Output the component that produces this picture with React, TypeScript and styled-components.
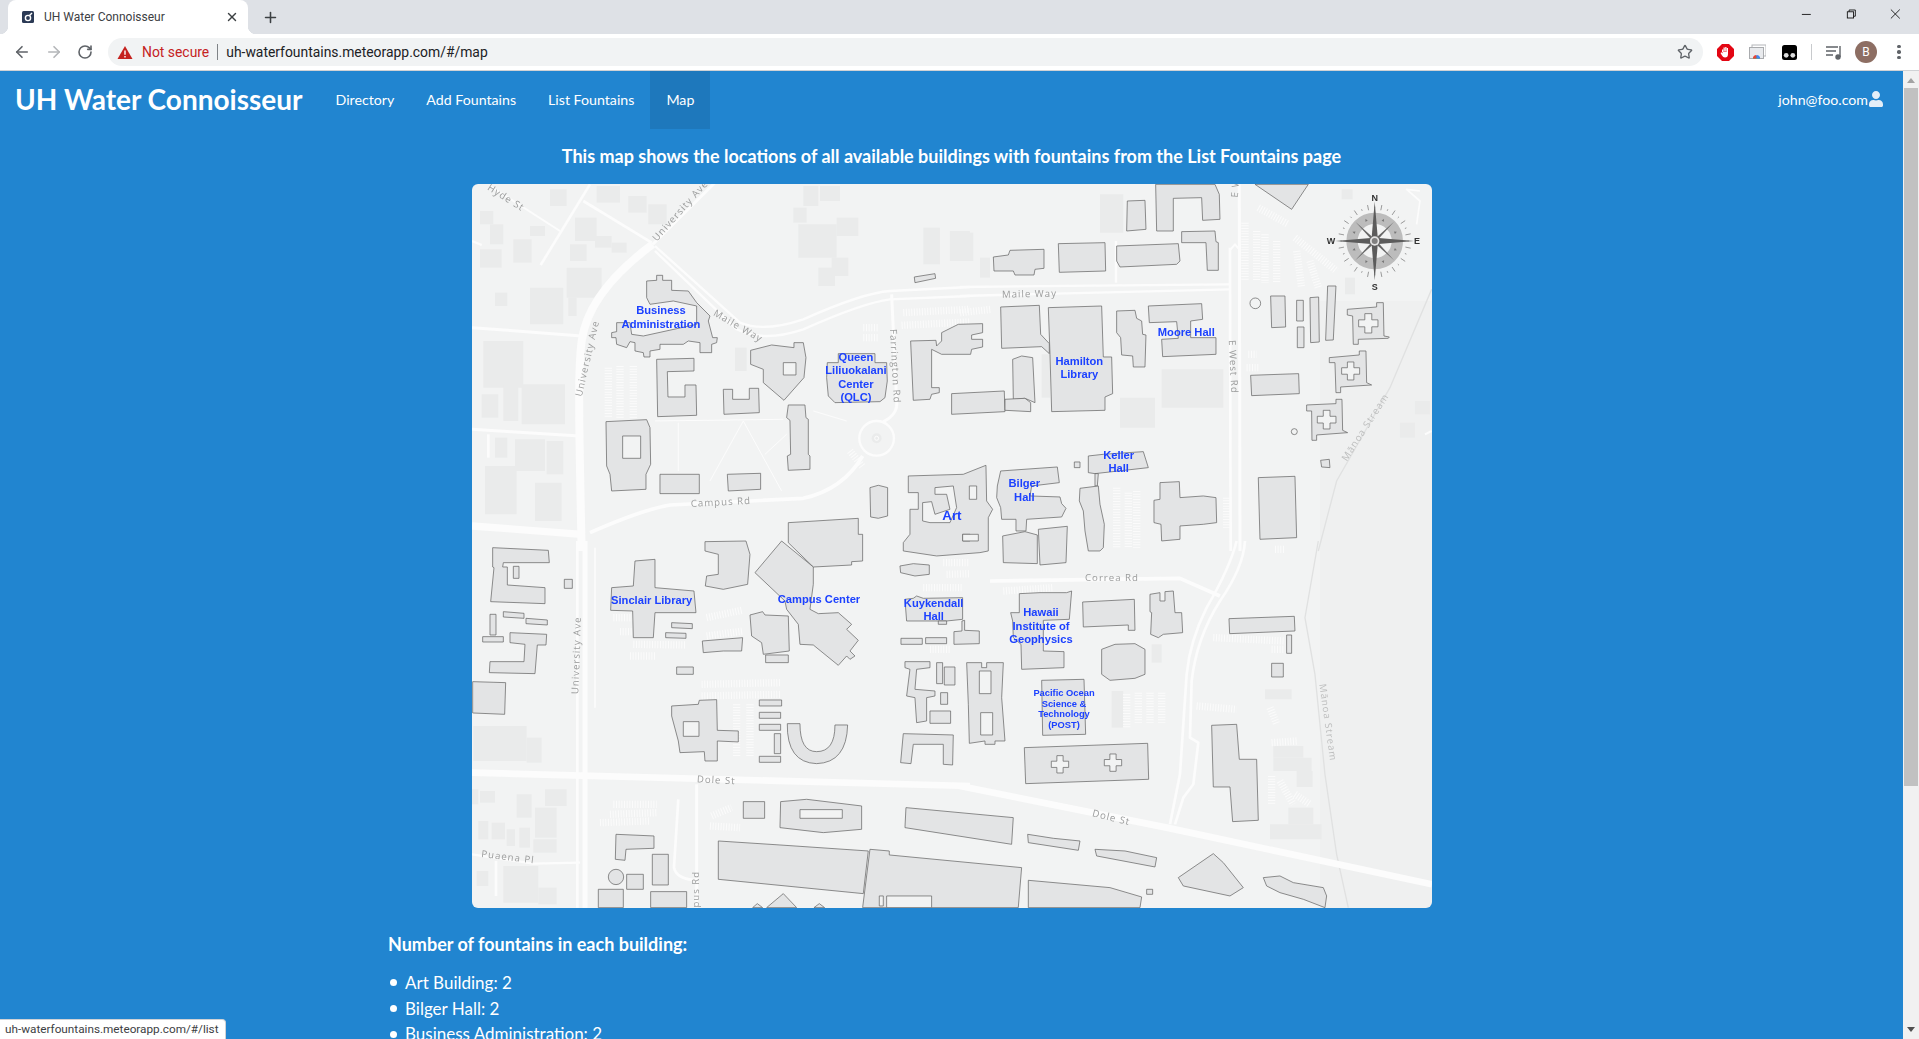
import styled, { createGlobalStyle } from 'styled-components';
import { ArrowLeft, ArrowRight, Plus, RotateCw, Star, X } from 'lucide-react';
import { FaUser } from 'react-icons/fa';

// map data is in "crop units": 3 units = 1px, each group has its own page offset
const r = (x1: number, y1: number, x2: number, y2: number) => `M${x1} ${y1}L${x2} ${y1}L${x2} ${y2}L${x1} ${y2}Z`;
const cross = (cx: number, cy: number, s = 30) => {
  const a = s * 0.36;
  return `M${cx - a} ${cy - s}H${cx + a}V${cy - a}H${cx + s}V${cy + a}H${cx + a}V${cy + s}H${cx - a}V${cy + a}H${cx - s}V${cy - a}H${cx - a}Z`;
};
const circle = (cx: number, cy: number, rad: number) => `M${cx - rad} ${cy}a${rad} ${rad} 0 1 0 ${rad * 2} 0a${rad} ${rad} 0 1 0 ${-rad * 2} 0Z`;

type Road = { d: string; w: number };
type RoadLabel = { t: string; x: number; y: number; a: number; light?: boolean };
type Label = { lines: string[]; x: number; y: number; size?: number; pitch?: number };
type Layer = {
  x: number;
  y: number;
  off: string[];
  stripes: string[];
  roads: Road[];
  buildings: string[];
  holes: string[];
  roadLabels: RoadLabel[];
  labels: Label[];
};

const layers: Layer[] = [
  {
    x: 470,
    y: 180,
    off: [
      r(30, 90, 70, 130), r(60, 130, 100, 190), r(130, 175, 185, 245), r(180, 135, 225, 165), r(240, 25, 290, 75),
      r(315, 110, 380, 180), r(300, 190, 350, 240), r(375, 165, 425, 200), r(425, 185, 470, 215), r(380, 15, 450, 65),
      r(475, 45, 530, 95), r(535, 70, 590, 130), r(290, 260, 395, 350), r(30, 205, 95, 260),
      r(75, 335, 112, 375), r(180, 320, 280, 430), r(295, 350, 320, 405), r(40, 480, 160, 620),
      r(35, 640, 85, 710), r(100, 610, 145, 720), r(155, 610, 285, 730), r(75, 770, 112, 830), r(135, 775, 225, 870),
      r(230, 780, 280, 880), r(45, 855, 140, 1000), r(195, 905, 275, 1020),
      r(970, 80, 1010, 125), r(985, 130, 1100, 230), r(1100, 110, 1165, 165), r(1000, 15, 1045, 75), r(1360, 140, 1410, 250),
      r(1440, 150, 1500, 240), r(1045, 260, 1095, 315), r(1085, 230, 1135, 285), r(1050, 15, 1110, 60),
      r(795, 500, 830, 570), circle(1220, 772, 15),
    ],
    stripes: ['M1300 395L1500 385', 'M1295 433L1500 423', 'M415 560L415 710', 'M450 555L450 710', 'M490 555L490 710', 'M1180 440L1225 440', 'M1180 470L1225 470', 'M1140 810L1180 860'],
    roads: [
      { d: 'M548 190C440 270 350 370 335 480C325 560 325 650 335 1110', w: 24 },
      { d: 'M548 190L735 5', w: 9 },
      { d: 'M340 60L545 185', w: 8 },
      { d: 'M360 10L212 252', w: 8 },
      { d: 'M60 15L270 150', w: 6 },
      { d: 'M6 180L35 192', w: 7 },
      { d: 'M555 195L810 425Q880 455 1000 415Q1180 335 1260 330L1500 318', w: 7 },
      { d: 'M555 210L800 445Q880 485 1000 445Q1180 365 1260 355L1500 345', w: 7 },
      { d: 'M1265 340L1280 660Q1285 700 1240 722', w: 9 },
      { d: 'M6 440L335 465', w: 9 },
      { d: 'M6 745L330 765', w: 9 },
      { d: 'M55 760L55 830', w: 8 },
      { d: 'M6 1035L335 1060', w: 22 },
      { d: 'M360 1055Q520 985 600 972L1000 952Q1120 925 1178 825', w: 11 },
      { d: circle(1220, 772, 52), w: 7 },
      { d: circle(1220, 772, 6), w: 3 },
      { d: 'M625 725L625 870', w: 3 },
      { d: 'M820 720L720 900', w: 3 },
      { d: 'M820 720L935 930', w: 3 },
      { d: 'M885 820L950 760', w: 3 },
      { d: 'M555 720L940 715', w: 3 },
      { d: 'M1030 690L1130 720', w: 3 },
    ],
    buildings: [
      'M530 300L560 298L560 283L578 283L578 298L605 298L605 328L655 330L680 365L720 405L715 420L728 470L742 470L740 485L725 490L725 515L690 515L690 485L655 480L640 490L570 490L570 505L540 510L540 528L522 528L520 515L495 510L495 485L480 482L470 500L440 490L438 470L425 470L425 455L440 452L440 425L480 425L485 460L520 465L680 430L680 375L610 360L540 370L530 350Z',
      'M560 535L672 532L672 570L592 572L594 648L645 648L645 612L678 612L680 703L563 707Z',
      'M760 625L788 625L788 655L838 655L838 622L866 622L868 695L762 700Z',
      'M842 508L905 492L972 500L972 485L1000 485L1008 530L1002 590L942 658L880 605L880 565L842 550Z',
      'M1072 545L1105 545L1105 518L1215 518L1215 545L1250 545L1252 600L1245 650L1230 662L1095 665L1075 645L1070 590Z',
      'M955 672L1005 672L1008 710L1015 715L1015 820L1020 825L1020 865L955 868L952 825L962 820L960 718L950 710Z',
      'M408 722L530 716L540 740L542 850L528 880L528 925L425 930L420 880L410 855Z',
      r(570, 880, 688, 938),
      'M772 880L872 877L872 925L775 930Z',
      'M1322 480L1398 478L1400 495L1415 480L1415 455L1465 430L1538 428L1538 455L1505 462L1505 475L1538 475L1538 498L1505 505L1502 520L1415 520L1385 505L1385 620L1408 620L1408 635L1385 640L1380 655L1330 658Z',
      'M1445 638L1603 630L1605 692L1445 700Z',
      'M1200 920L1225 913L1253 920L1253 1005L1225 1012L1202 1008Z',
      'M1315 885L1480 880L1548 853L1550 960L1568 985L1555 1010L1555 1110L1530 1115L1400 1125L1300 1110L1300 1085L1320 1060L1320 985L1345 985L1345 935L1315 935Z',
      'M1333 288L1395 278L1397 292L1335 305Z',
    ],
    holes: [
      r(940, 545, 978, 582),
      r(458, 765, 512, 832),
      'M1395 920L1450 915L1460 980L1440 1025L1380 1025L1358 1020L1358 965L1385 962L1395 1000L1440 985L1430 940L1395 940Z',
      r(1478, 1060, 1500, 1080),
    ],
    roadLabels: [
      { t: 'Hyde St', x: 50, y: 25, a: 32 },
      { t: 'University Ave', x: 560, y: 182, a: -48 },
      { t: 'University Ave', x: 335, y: 648, a: -77 },
      { t: 'Maile Way', x: 728, y: 402, a: 30 },
      { t: 'Farrington Rd', x: 1260, y: 445, a: 87 },
      { t: 'Campus Rd', x: 663, y: 978, a: -3 },
    ],
    labels: [
      { lines: ['Business', 'Administration'], x: 573, y: 400 },
      { lines: ['Queen', 'Liliuokalani', 'Center', '(QLC)'], x: 1158, y: 540 },
      { lines: ['Art'], x: 1446, y: 1017, size: 40 },
    ],
  },
  {
    x: 960,
    y: 180,
    off: [
      r(0, 155, 40, 240), r(60, 230, 90, 290), r(420, 40, 490, 155), r(1145, 25, 1178, 55), r(1155, 290, 1185, 340),
      r(605, 565, 790, 680), r(480, 650, 585, 740), r(245, 520, 270, 650), r(1365, 660, 1410, 700), r(1320, 725, 1365, 770),
    ],
    stripes: ['M855 125L855 300', 'M890 150L890 300', 'M915 160L915 305', 'M950 180L950 305', 'M1010 210L1025 320', 'M1050 240L1075 320', 'M1005 170L1130 270', 'M895 80L985 130', 'M0 395L95 385', 'M470 920L470 1100', 'M505 935L505 1100', 'M530 930L530 1100', 'M800 950L800 1040', 'M865 520L890 520', 'M860 560L895 560'],
    roads: [
      { d: 'M810 200L812 1110', w: 8 },
      { d: 'M838 10L840 1110', w: 9 },
      { d: 'M812 205L825 190L838 205', w: 6 },
      { d: 'M0 318L810 310', w: 7 },
      { d: 'M0 345L810 325', w: 7 },
      { d: 'M468 180L468 305', w: 7 },
      { d: 'M1380 30L1340 25L1380 60L1370 130', w: 5 },
      { d: 'M1415 750L1395 760', w: 6 },
    ],
    buildings: [
      'M502 60L555 58L558 145L500 150Z',
      'M587 10L765 10L778 40L780 115L728 118L725 50L640 52L640 150L590 150Z',
      'M100 228L145 222L150 208L252 205L252 262L225 265L222 282L165 282L160 270L102 270Z',
      'M295 188L435 185L437 270L298 274Z',
      'M470 195L655 188L660 240L650 250L480 258L470 240Z',
      'M665 152L765 150L768 182L775 185L775 268L742 268L738 185L665 185Z',
      'M885 10L1045 10L995 85Z',
      'M122 378L238 373L242 460L268 488L268 518L245 497L125 502Z',
      'M265 380L425 375L430 528L455 528L458 638L435 648L435 688L275 692L270 520Z',
      'M470 390L525 388L530 412L545 420L548 460L558 462L555 558L520 558L518 525L485 522L482 470L470 455Z',
      'M565 375L725 368L728 415L692 420L692 470L768 470L768 520L608 527L605 475L655 472L650 422L568 425Z',
      'M158 535L185 525L218 530L225 665L195 652L160 655Z',
      'M135 655L195 652L212 665L212 692L135 688Z',
      'M385 825L430 820L550 812L565 860L405 878L385 875Z',
      'M405 878L415 878L412 915L405 915Z',
      r(343, 843, 360, 860),
      'M360 922L415 915L420 970L433 1030L430 1100L420 1110L385 1110L375 1050L370 990L358 960Z',
      'M122 870L292 858L298 905L215 915L210 945L300 948L305 968L318 982L305 1008L200 1015L198 1050L168 1050L168 1015L125 1015L122 980L110 950L112 915Z',
      'M128 1065L195 1052L232 1062L232 1148L130 1145Z',
      'M235 1045L322 1036L318 1145L240 1152Z',
      'M600 905L658 902L660 950L730 945L768 950L770 1025L730 1030L660 1035L660 1075L605 1080L603 1030L582 1025L582 958L600 955Z',
      'M895 890L1005 886L1010 1070L900 1075Z',
      'M932 345L975 345L977 438L935 440Z',
      r(1010, 358, 1030, 420),
      r(1012, 438, 1032, 500),
      'M1050 350L1076 348L1078 483L1052 485Z',
      'M1103 315L1128 315L1120 477L1097 478Z',
      'M872 583L1016 578L1018 638L875 644Z',
      'M1162 385L1250 378L1250 365L1270 365L1272 465L1288 468L1285 472L1195 475L1195 490L1180 490L1178 405L1162 402Z',
      'M1108 530L1198 522L1198 510L1218 510L1220 605L1235 612L1142 618L1142 635L1128 635L1125 545L1108 545Z',
      'M1040 672L1128 668L1128 655L1146 655L1148 748L1163 755L1070 762L1070 778L1056 778L1055 690L1040 690Z',
      'M1082 838L1108 835L1110 860L1085 858Z',
    ],
    holes: [r(28, 915, 50, 955), r(8, 1060, 55, 1080), cross(1225, 427, 29), cross(1172, 570, 27), cross(1100, 716, 28), circle(886, 367, 16), circle(1003, 752, 9)],
    roadLabels: [
      { t: 'Maile Way', x: 126, y: 350, a: -1 },
      { t: 'E West Rd', x: 806, y: 478, a: 87 },
      { t: 'E W', x: 833, y: 50, a: -85 },
      { t: 'Mānoa Stream', x: 1160, y: 842, a: -57, light: true },
    ],
    labels: [
      { lines: ['Moore Hall'], x: 679, y: 464 },
      { lines: ['Hamilton', 'Library'], x: 358, y: 552 },
      { lines: ['Keller', 'Hall'], x: 476, y: 834 },
      { lines: ['Bilger', 'Hall'], x: 193, y: 919 },
    ],
  },
  {
    x: 470,
    y: 540,
    off: [
      r(10, 555, 170, 660), r(170, 590, 215, 665), r(6, 745, 25, 790), r(30, 750, 75, 785), r(140, 760, 185, 830), r(225, 745, 290, 795),
      r(195, 800, 260, 890), r(25, 840, 55, 895), r(65, 845, 105, 895), r(110, 865, 135, 915), r(148, 860, 180, 920), r(190, 895, 260, 935),
      r(100, 975, 205, 1085), r(205, 1040, 260, 1090), r(20, 990, 55, 1035),
    ],
    stripes: ['M430 230L490 230', 'M450 272L490 272', 'M490 310L645 312', 'M480 345L560 345', 'M710 230L815 208', 'M710 285L820 270', 'M695 430L930 425', 'M695 465L930 460', 'M430 790L560 790', 'M420 820L560 815', 'M390 845L540 840', 'M725 825L785 800', 'M720 855L810 860', 'M1420 65L1500 65', 'M1430 100L1500 98', 'M1360 140L1480 140', 'M1380 325L1440 325', 'M800 490L800 650', 'M840 490L840 650'],
    roads: [
      { d: 'M322 0L322 1100', w: 8 },
      { d: 'M345 0L345 1100', w: 15 },
      { d: 'M6 695L1500 735', w: 20 },
      { d: 'M680 730L680 1100', w: 9 },
      { d: 'M6 940L190 968L330 965', w: 7 },
      { d: 'M78 960L78 1065', w: 8 },
      { d: 'M625 775L612 980Q620 1015 680 1018', w: 8 },
      { d: 'M375 20L375 500', w: 5 },
    ],
    buildings: [
      'M68 20L235 28L238 65L100 65L98 78L112 78L112 132L225 140L225 188L62 182L72 80L68 78Z',
      r(130, 76, 147, 112), r(283, 115, 307, 142), 'M100 212L162 217L162 232L100 228Z', 'M168 232L232 237L232 252L168 248Z',
      r(60, 220, 78, 282), r(38, 287, 100, 303),
      'M120 275L230 280L228 312L202 312L195 398L58 395L60 362L162 362L165 310L120 305Z',
      'M8 422L107 425L104 520L8 516Z',
      'M495 60L555 55L555 140L672 150L678 215L555 215L550 290L490 290L488 210L422 208L425 140L490 135Z',
      'M605 245L667 248L667 263L605 260Z', 'M587 275L648 277L648 292L587 290Z',
      'M705 2L828 0L840 40L833 130L760 145L706 135L710 105L745 100L745 40L705 30Z',
      'M955 -55L1165 -68L1165 -20L1178 -20L1178 60L1145 62L1145 72L1050 77L1030 78L955 5Z',
      'M935 0L1030 78L1030 130L1020 205L1045 218L1105 215L1145 250L1130 265L1165 298L1140 330L1155 345L1140 355L1130 345L1105 373L1030 312L990 310L985 250L950 205L945 180L855 95Z',
      'M840 222L878 212L885 222L955 225L958 330L880 340L875 305L845 285Z',
      r(887, 342, 955, 365),
      'M697 300L818 290L815 330L760 330L700 335Z',
      r(620, 378, 670, 400),
      'M605 495L685 490L688 478L740 476L742 568L805 570L805 603L742 600L742 660L705 660L703 632L630 635L625 600L605 525Z',
      r(868, 477, 935, 495), r(868, 514, 932, 532), r(868, 550, 932, 568), r(913, 578, 932, 638), r(868, 646, 932, 664),
      'M952 548L990 548Q990 632 1040 632Q1095 632 1095 552L1133 552Q1130 665 1040 668Q950 665 952 548Z',
      'M1290 75L1330 68L1378 72L1378 100L1335 105L1292 95Z',
      'M1305 175L1330 172L1340 165L1360 172L1478 170L1478 235L1430 240L1310 240Z',
      r(1405, 240, 1430, 250), r(1293, 292, 1357, 310), r(1367, 290, 1430, 308), 'M1452 272L1476 270L1476 240L1484 238L1484 268L1528 270L1528 308L1452 310Z',
      'M1305 362L1380 362L1380 380L1340 385L1335 445L1395 450L1395 465L1370 470L1370 540L1340 545L1335 470L1310 465L1320 385L1305 380Z',
      r(1400, 365, 1418, 428), r(1423, 378, 1455, 432), r(1412, 455, 1433, 490), r(1380, 510, 1442, 547),
      'M1300 578L1450 582L1448 672L1420 670L1420 610L1330 610L1323 668L1292 665Z',
      r(820, 782, 884, 832),
      'M932 782L1010 775L1175 795L1175 865L1060 875L930 860Z',
      'M1308 800L1630 830L1625 910L1305 860Z',
      'M745 900L930 912L1195 930L1180 1058L745 1015Z',
      'M1200 925L1258 930L1258 942L1655 980L1645 1100L1178 1100Z',
      'M438 880L552 885L552 922L468 925L465 958L436 955Z',
      r(547, 940, 595, 1032), circle(438, 1008, 23), r(470, 1000, 520, 1045), r(385, 1045, 460, 1100), r(542, 1052, 650, 1100),
      'M890 1100L940 1058L980 1100Z', 'M848 1100L862 1088L878 1100Z', 'M1032 1100L1048 1088L1064 1100Z',
    ],
    holes: [r(640, 542, 687, 586), r(990, 806, 1117, 832), r(1228, 1065, 1240, 1095), r(1250, 1065, 1385, 1100)],
    roadLabels: [
      { t: 'University Ave', x: 325, y: 460, a: -88 },
      { t: 'Dole St', x: 680, y: 724, a: 3 },
      { t: 'Puaena Pl', x: 33, y: 948, a: 7 },
      { t: 'Campus Rd', x: 688, y: 1170, a: -90 },
    ],
    labels: [
      { lines: ['Sinclair Library'], x: 545, y: 189 },
      { lines: ['Campus Center'], x: 1047, y: 187 },
      { lines: ['Kuykendall', 'Hall'], x: 1391, y: 197 },
    ],
  },
  {
    x: 960,
    y: 540,
    off: [
      r(915, 445, 995, 475), r(940, 615, 1030, 650), r(940, 650, 1055, 690), r(1010, 690, 1058, 738), r(930, 850, 1085, 895), r(985, 800, 1060, 850),
      r(575, 310, 605, 365), r(455, 450, 490, 560),
    ],
    stripes: ['M500 460L500 560', 'M535 455L535 545', 'M570 455L570 545', 'M605 455L605 545', 'M710 495L830 505', 'M930 500L950 550', 'M935 605L1010 600', 'M935 705L935 790', 'M960 720L1000 790', 'M1005 760L1050 790', 'M130 150L280 140', 'M945 25L975 25', 'M935 325L975 325', 'M760 290L975 300'],
    roads: [
      { d: 'M90 120L660 112L780 165', w: 11 },
      { d: 'M830 0Q810 80 740 200Q690 300 680 400L660 700L630 850', w: 8 },
      { d: 'M855 0Q850 80 780 180Q710 290 695 420L690 590L715 605L700 730L670 770L645 850', w: 8 },
      { d: 'M0 735L620 860L1416 1030', w: 20 },
    ],
    buildings: [
      'M178 158L240 155L320 155L335 150L328 235L250 238L250 330L312 332L312 380L185 385L183 310L160 290L158 240L152 215L178 215Z',
      'M368 183L523 175L525 268L505 268L505 252L370 258Z',
      'M570 160L600 155L600 180L615 180L615 152L640 150L645 215L665 215L668 275L610 280L595 290L572 280L575 215L570 212Z',
      'M425 325L465 310L525 308L555 325L555 400L525 412L450 418L425 400Z',
      'M20 365L65 365L65 380L80 380L80 365L130 365L125 470L135 600L105 600L105 610L75 610L75 600L28 607L25 490Z',
      'M245 418L372 415L377 580L248 583Z',
      'M193 620L563 607L566 715L197 728Z',
      'M807 233L1003 226L1005 270L809 278Z',
      r(980, 282, 995, 337),
      r(935, 367, 970, 408),
      'M755 553L830 550L838 655L890 655L895 838L818 842L810 738L760 738Z',
      'M203 880L280 892L360 900L355 928L205 905Z',
      'M405 925L495 930L590 950L585 978L410 945Z',
      'M205 1018L450 1040L545 1068L540 1100L205 1100Z',
      'M655 1010L760 938L790 965L850 1040L810 1065L670 1035Z',
      'M910 1010L960 1005L1000 1025L1090 1040L1100 1065L1095 1100L1030 1075L960 1055L920 1035Z',
      r(560, 1045, 578, 1060),
    ],
    holes: [r(58, 390, 93, 458), r(62, 515, 98, 582), cross(300, 670, 26), cross(459, 665, 26)],
    roadLabels: [
      { t: 'Correa Rd', x: 375, y: 121, a: 0 },
      { t: 'Dole St', x: 395, y: 825, a: 14 },
      { t: 'Mānoa Stream', x: 1078, y: 430, a: 82, light: true },
    ],
    labels: [
      { lines: ['Hawaii', 'Institute of', 'Geophysics'], x: 243, y: 226 },
      { lines: ['Pacific Ocean', 'Science &', 'Technology', '(POST)'], x: 312, y: 465, size: 28, pitch: 32 },
    ],
  },
];

const ticks = Array.from({ length: 32 }, (_, i) => (i * 360) / 32);
const markers = [22.5, 67.5, 112.5, 157.5, 202.5, 247.5, 292.5, 337.5];

const Compass = () => (
  <g transform="translate(1374.7 240) scale(0.3333)">
    <circle r="68" fill="none" stroke="#bcbcbc" strokeWidth="34" />
    {ticks.map((a, i) => (
      <line key={a} y1={i % 2 ? -98 : -94} y2={i % 2 ? -103 : -110} stroke="#777" strokeWidth="2" transform={`rotate(${a + 11.25})`} />
    ))}
    {markers.map((a) => (
      <path key={a} d="M0 -72l-4 8h8Z" fill="#777" transform={`rotate(${a})`} />
    ))}
    {[45, 135, 225, 315].map((a) => (
      <path key={a} d="M0 -82L-4 -10L4 -10Z" fill="#666" transform={`rotate(${a})`} />
    ))}
    {[0, 90, 180, 270].map((a) => (
      <path key={a} d="M0 -118L-9 -12L9 -12Z" fill="#5c5c5c" transform={`rotate(${a})`} />
    ))}
    <circle r="14" fill="#e4e4e4" />
    <circle r="9" fill="#808080" />
    <CompassLetter y={-121}>N</CompassLetter>
    <CompassLetter y={146}>S</CompassLetter>
    <CompassLetter x={127} y={10}>E</CompassLetter>
    <CompassLetter x={-131} y={10}>W</CompassLetter>
  </g>
);

const CampusMap = () => (
  <MapSvg viewBox="472 183 960 724">
    <rect x="472" y="183" width="960" height="724" fill="#f2f3f3" />
    <rect x="1320" y="300" width="112" height="607" fill="#eeeeee" opacity="0.7" />
    {layers.map((l) => (
      <g key={`${l.x}-${l.y}-off`} transform={`translate(${l.x} ${l.y}) scale(0.3333)`}>
        {l.off.map((d) => (
          <OffBuilding key={d} d={d} />
        ))}
        {l.stripes.map((d) => (
          <Stripe key={d} d={d} />
        ))}
      </g>
    ))}
    <g transform="translate(960 180) scale(0.3333)">
      <Stream d="M1415 325L1290 620L1130 900L1075 1110" />
    </g>
    <g transform="translate(960 540) scale(0.3333)">
      <Stream d="M1075 0L1035 230L1065 400L1095 700L1130 940L1165 1100" />
    </g>
    {layers.map((l) => (
      <g key={`${l.x}-${l.y}-roads`} transform={`translate(${l.x} ${l.y}) scale(0.3333)`}>
        {l.roads.map((road) => (
          <RoadLine key={road.d} d={road.d} strokeWidth={road.w} />
        ))}
      </g>
    ))}
    {layers.map((l) => (
      <g key={`${l.x}-${l.y}-b`} transform={`translate(${l.x} ${l.y}) scale(0.3333)`}>
        {l.buildings.map((d) => (
          <Building key={d} d={d} />
        ))}
        {l.holes.map((d) => (
          <Hole key={d} d={d} />
        ))}
      </g>
    ))}
    {layers.map((l) => (
      <g key={`${l.x}-${l.y}-t`} transform={`translate(${l.x} ${l.y}) scale(0.3333)`}>
        {l.roadLabels.map((t) => (
          <RoadText key={`${t.t}${t.x}`} $light={t.light} transform={`translate(${t.x} ${t.y}) rotate(${t.a})`}>
            {t.t}
          </RoadText>
        ))}
        {l.labels.map((label) =>
          label.lines.map((line, i) => (
            <BuildingText key={line} x={label.x} y={label.y + i * (label.pitch ?? 40)} $size={label.size ?? 33.5}>
              {line}
            </BuildingText>
          )),
        )}
      </g>
    ))}
    <Compass />
  </MapSvg>
);

const counts = ['Art Building: 2', 'Bilger Hall: 2', 'Business Administration: 2', 'Campus Center: 2'];

const App = () => {
  return (
    <>
      <GlobalStyle />
      <Window>
        <TabStrip>
          <Tab>
            <svg width="12" height="12" viewBox="0 0 12 12">
              <rect width="12" height="12" rx="1.5" fill="#2b3a55" />
              <circle cx="6" cy="7" r="2.6" fill="none" stroke="#fff" strokeWidth="1.4" />
              <path d="M7.5 4.5L10 2" stroke="#fff" strokeWidth="1.4" />
            </svg>
            <TabTitle>UH Water Connoisseur</TabTitle>
            <X size={14} color="#3c4043" strokeWidth={2.4} />
          </Tab>
          <NewTab>
            <Plus size={17} color="#3c4043" strokeWidth={2.2} />
          </NewTab>
          <WindowControls>
            <svg width="12" height="12" viewBox="0 0 12 12">
              <path d="M1 6.5H11" stroke="#111" />
            </svg>
            <svg width="12" height="12" viewBox="0 0 12 12" fill="none" stroke="#111">
              <rect x="1.5" y="3.5" width="7" height="7" />
              <path d="M3.5 3.5V1.5H10.5V8.5H8.5" />
            </svg>
            <svg width="12" height="12" viewBox="0 0 12 12">
              <path d="M1 1L11 11M11 1L1 11" stroke="#111" />
            </svg>
          </WindowControls>
        </TabStrip>
        <Toolbar>
          <NavIcons>
            <ArrowLeft size={18} color="#5f6368" strokeWidth={2.2} />
            <ArrowRight size={18} color="#b4b6b9" strokeWidth={2.2} />
            <RotateCw size={16} color="#5f6368" strokeWidth={2.4} />
          </NavIcons>
          <Omnibox>
            <svg width="16" height="15" viewBox="0 0 16 15">
              <path d="M8 1L15.5 14H.5Z" fill="#c5221f" />
              <path d="M8 5.5V9.8M8 11V12.4" stroke="#fff" strokeWidth="1.4" />
            </svg>
            <NotSecure>Not secure</NotSecure>
            <OmniDivider />
            <Url>uh-waterfountains.meteorapp.com/#/map</Url>
            <Star size={16} color="#5f6368" strokeWidth={2} />
          </Omnibox>
          <Extensions>
            <ExtIcon $gap={14}>
              <svg width="17" height="17" viewBox="0 0 17 17">
                <path d="M5 0H12L17 5V12L12 17H5L0 12V5Z" fill="#e30613" />
                <path d="M5 8V5.5H6.2V8M6.5 7V3.5H7.8V7M8.2 7V3H9.5V7M9.8 7.5V4H11V10Q11 13.5 8 13.5Q6 13.5 5 11.5L3.5 9L4.5 8.3L5.5 9.5V7.5Z" fill="#fff" />
              </svg>
            </ExtIcon>
            <ExtIcon $gap={15}>
              <svg width="17" height="16" viewBox="0 0 17 16">
                <rect x="3" y="1" width="14" height="11" fill="none" stroke="#b4b6b9" />
                <rect x=".5" y="3.5" width="14" height="11" fill="#e8eaed" stroke="#a9abae" />
                <path d="M4 14.5a3.6 3.6 0 0 1 7 0Z" fill="#34a853" />
                <path d="M4 14.5a3.6 3.6 0 0 1 3.5 -3.6V14.5Z" fill="#ea4335" />
                <path d="M7.5 10.9a3.6 3.6 0 0 1 3.5 3.6H7.5Z" fill="#4285f4" />
              </svg>
            </ExtIcon>
            <ExtIcon $gap={16}>
              <svg width="15" height="15" viewBox="0 0 15 15">
                <rect width="15" height="15" rx="2.5" fill="#000" />
                <circle cx="4.2" cy="10.3" r="2.4" fill="#ddd" />
                <circle cx="10.8" cy="10.3" r="2.4" fill="#ddd" />
              </svg>
            </ExtIcon>
            <ExtDivider />
            <ExtIcon $gap={14}>
              <svg width="17" height="15" viewBox="0 0 17 15" fill="none" stroke="#5f6368" strokeWidth="1.4">
                <path d="M0 2H12M0 6H10M0 10H7" />
                <path d="M14 1V12" />
                <circle cx="12" cy="12" r="2" fill="#5f6368" />
              </svg>
            </ExtIcon>
            <Avatar>B</Avatar>
            <MenuDots>
              <i />
              <i />
              <i />
            </MenuDots>
          </Extensions>
        </Toolbar>
        <PageArea>
          <Page>
            <NavBar>
              <Brand>UH Water Connoisseur</Brand>
              <NavItem>Directory</NavItem>
              <NavItem>Add Fountains</NavItem>
              <NavItem>List Fountains</NavItem>
              <NavItem $active>Map</NavItem>
              <UserMenu>
                john@foo.com
                <FaUser size={16} color="#e3eef8" />
              </UserMenu>
            </NavBar>
            <Heading>This map shows the locations of all available buildings with fountains from the List Fountains page</Heading>
            <MapFrame>
              <CampusMap />
            </MapFrame>
            <Container>
              <SubHeading>Number of fountains in each building:</SubHeading>
              <CountList>
                {counts.map((c) => (
                  <li key={c}>{c}</li>
                ))}
              </CountList>
            </Container>
          </Page>
          <ScrollBar>
            <ScrollArrow />
            <ScrollThumb />
            <ScrollArrow $down />
          </ScrollBar>
          <StatusBubble>uh-waterfountains.meteorapp.com/#/list</StatusBubble>
        </PageArea>
      </Window>
    </>
  );
};

export default App;

const GlobalStyle = createGlobalStyle`
  html, body {
    margin: 0;
    height: 100%;
    overflow: hidden;
    font-family: Lato, "Liberation Sans", sans-serif;
  }
  * { box-sizing: border-box; }
`;

const Window = styled.div`
  width: 100vw;
  height: 100vh;
  display: flex;
  flex-direction: column;
  overflow: hidden;
`;

const TabStrip = styled.div`
  height: 34px;
  flex: none;
  background: #dee1e6;
  display: flex;
  align-items: stretch;
  padding-left: 8px;
`;

const Tab = styled.div`
  position: relative;
  width: 240px;
  background: #fff;
  border-radius: 8px 8px 0 0;
  display: flex;
  align-items: center;
  padding: 0 9px 0 14px;
  color: #3c4043;

  &::before,
  &::after {
    content: '';
    position: absolute;
    bottom: 0;
    width: 8px;
    height: 8px;
  }
  &::before {
    left: -8px;
    background: radial-gradient(circle at 0 0, #dee1e6 8px, #fff 8.5px);
  }
  &::after {
    right: -8px;
    background: radial-gradient(circle at 100% 0, #dee1e6 8px, #fff 8.5px);
  }
`;

const TabTitle = styled.span`
  flex: 1;
  margin-left: 10px;
  font: 12px Roboto, sans-serif;
`;

const NewTab = styled.div`
  width: 44px;
  display: flex;
  align-items: center;
  justify-content: center;
`;

const WindowControls = styled.div`
  margin-left: auto;
  width: 138px;
  padding: 0 18px 6px 20px;
  display: flex;
  align-items: center;
  justify-content: space-between;
  gap: 34px;
`;

const Toolbar = styled.div`
  height: 37px;
  flex: none;
  background: #fff;
  border-bottom: 1px solid #d0d2d5;
  display: flex;
  align-items: center;
`;

const NavIcons = styled.div`
  width: 108px;
  padding: 0 0 0 13px;
  display: flex;
  align-items: center;
  gap: 14px;
`;

const Omnibox = styled.div`
  width: 1595px;
  height: 28px;
  border-radius: 14px;
  background: #f1f3f4;
  display: flex;
  align-items: center;
  padding: 0 10px 0 9px;
  font: 13.9px Roboto, sans-serif;
`;

const NotSecure = styled.span`
  color: #c5221f;
  margin-left: 9px;
`;

const OmniDivider = styled.div`
  width: 1px;
  height: 16px;
  background: #7f8387;
  margin: 0 8px 0 8px;
`;

const Url = styled.span`
  flex: 1;
  color: #202124;
`;

const Extensions = styled.div`
  flex: 1;
  display: flex;
  align-items: center;
`;

const ExtIcon = styled.span<{ $gap: number }>`
  display: flex;
  margin-left: ${(p) => p.$gap}px;
`;

const ExtDivider = styled.div`
  width: 1px;
  height: 16px;
  margin-left: 14px;
  background: #c8cacd;
`;

const Avatar = styled.div`
  width: 22px;
  height: 22px;
  flex: none;
  margin-left: 12px;
  border-radius: 50%;
  background: #8d6e63;
  color: #fff;
  font: 12px Roboto, sans-serif;
  display: flex;
  align-items: center;
  justify-content: center;
`;

const MenuDots = styled.div`
  display: flex;
  flex-direction: column;
  gap: 2px;
  margin-left: 20px;

  i {
    width: 3.5px;
    height: 3.5px;
    border-radius: 50%;
    background: #5f6368;
  }
`;

const PageArea = styled.div`
  position: relative;
  flex: 1;
  min-height: 0;
  display: flex;
`;

const Page = styled.div`
  flex: 1;
  min-width: 0;
  overflow: hidden;
  background: #2185d0;
  color: #fff;
`;

const NavBar = styled.div`
  height: 58px;
  display: flex;
  align-items: stretch;
  padding-right: 19px;
  font-size: 14.2px;
`;

const Brand = styled.div`
  font-size: 28px;
  font-weight: 700;
  display: flex;
  align-items: center;
  padding: 0 17px 2px 15px;
`;

const NavItem = styled.div<{ $active?: boolean }>`
  display: flex;
  align-items: center;
  padding: 0 16px 2px;
  background: ${(p) => (p.$active ? '#1e78bc' : 'transparent')};
`;

const UserMenu = styled.div`
  margin-left: auto;
  padding-bottom: 2px;
  display: flex;
  align-items: center;
`;

const Heading = styled.h3`
  margin: 15px 0 0;
  text-align: center;
  font-size: 18px;
  line-height: 24px;
  font-weight: 700;
`;

const MapFrame = styled.div`
  width: 960px;
  height: 724px;
  margin: 16px auto 0;
  border-radius: 6px;
  overflow: hidden;
`;

const MapSvg = styled.svg`
  display: block;
  width: 960px;
  height: 724px;
  filter: blur(0.3px);
`;

const OffBuilding = styled.path`
  fill: #eaebeb;
`;

const Stripe = styled.path`
  fill: none;
  stroke: #fbfbfb;
  stroke-width: 22;
  stroke-dasharray: 3 5;
`;

const Stream = styled.path`
  fill: none;
  stroke: #e0e1e1;
  stroke-width: 4;
`;

const RoadLine = styled.path`
  fill: none;
  stroke: #fcfcfc;
  stroke-linejoin: round;
`;

const Building = styled.path`
  fill: #e3e4e5;
  stroke: #666;
  stroke-width: 2.2;
`;

const Hole = styled.path`
  fill: #f2f3f3;
  stroke: #666;
  stroke-width: 2.2;
`;

const RoadText = styled.text<{ $light?: boolean }>`
  font-family: "Open Sans", sans-serif;
  font-size: 29px;
  letter-spacing: 3px;
  fill: ${(p) => (p.$light ? '#bdbebe' : '#9b9c9c')};
`;

const BuildingText = styled.text<{ $size: number }>`
  font-family: "Liberation Sans", Arial, sans-serif;
  font-weight: 700;
  font-size: ${(p) => p.$size}px;
  text-anchor: middle;
  fill: #1c41ff;
`;

const CompassLetter = styled.text`
  font-family: "Liberation Sans", Arial, sans-serif;
  font-weight: 700;
  font-size: 27px;
  text-anchor: middle;
  fill: #333;
`;

const Container = styled.div`
  width: 1127px;
  margin: 23px auto 0;
`;

const SubHeading = styled.h4`
  margin: 0;
  font-size: 18px;
  line-height: 26px;
  font-weight: 700;
`;

const CountList = styled.ul`
  margin: 13px 0 0;
  padding: 0;
  list-style: none;
  font-size: 17px;
  line-height: 25.7px;

  li {
    display: flex;
    align-items: center;
  }
  li::before {
    content: '';
    width: 7px;
    height: 7px;
    margin: 0 8px 0 2px;
    border-radius: 50%;
    background: #fff;
  }
`;

const ScrollBar = styled.div`
  width: 16px;
  flex: none;
  background: #f1f1f1;
  display: flex;
  flex-direction: column;
  justify-content: space-between;
  align-items: center;
  padding-bottom: 2px;
`;

const ScrollArrow = styled.div<{ $down?: boolean }>`
  width: 0;
  height: 0;
  margin: 7px 0 5px;
  border-left: 4.5px solid transparent;
  border-right: 4.5px solid transparent;
  ${(p) => (p.$down ? 'border-top: 5px solid #505050;' : 'border-bottom: 5px solid #a3a3a3;')}
`;

const ScrollThumb = styled.div`
  width: 14px;
  height: 698px;
  margin-bottom: auto;
  background: #c1c1c1;
`;

const StatusBubble = styled.div`
  position: absolute;
  left: 0;
  bottom: 0;
  width: 226px;
  height: 20px;
  padding: 0 0 0 5px;
  background: #fff;
  border-top: 1px solid #d0d2d5;
  border-right: 1px solid #d0d2d5;
  border-top-right-radius: 4px;
  color: #3c4043;
  font: 11.75px/19px Roboto, sans-serif;
`;
